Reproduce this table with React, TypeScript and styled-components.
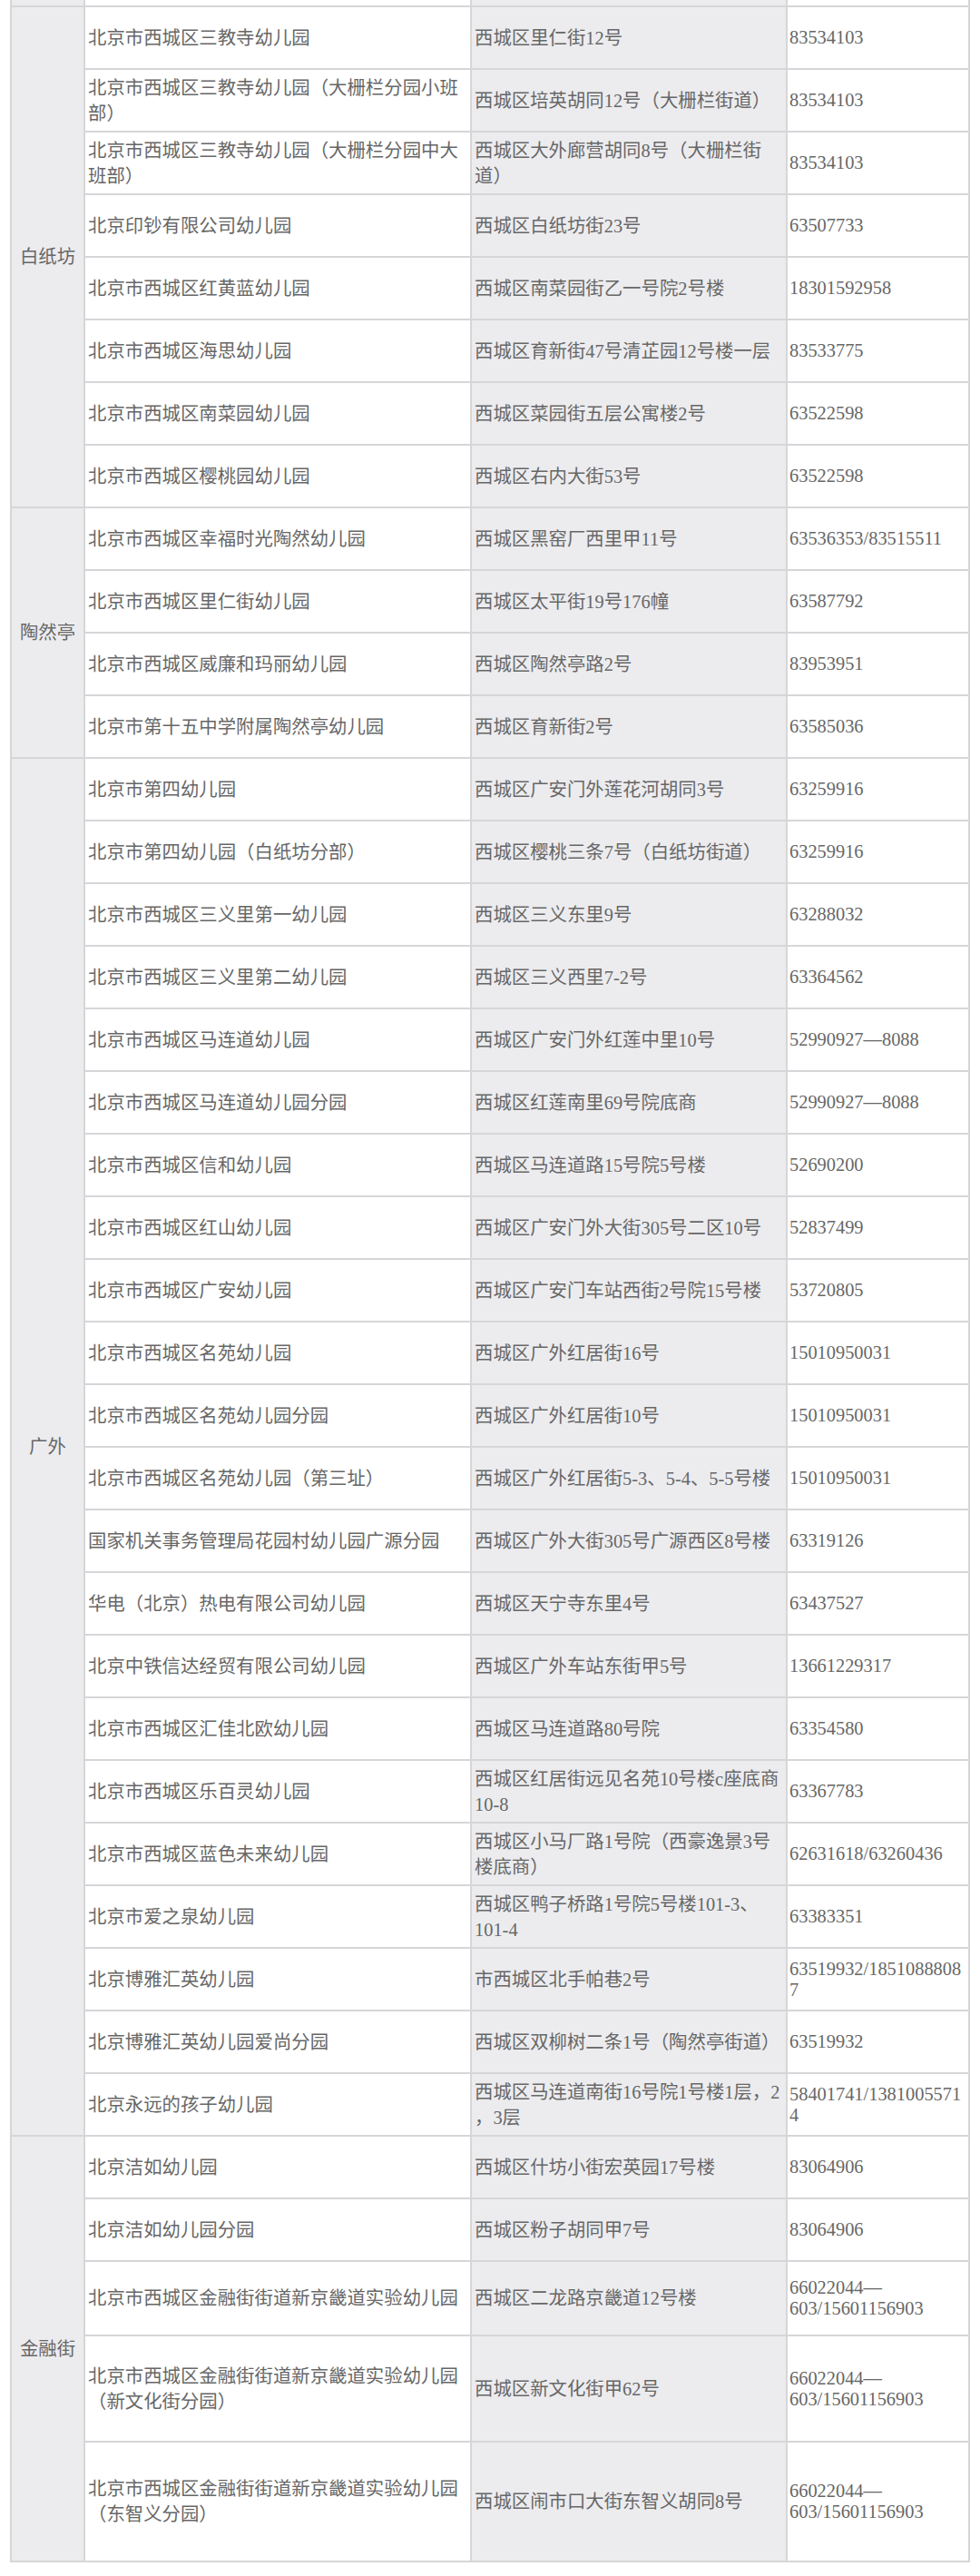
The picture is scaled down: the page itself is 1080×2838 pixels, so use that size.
import React from "react";
import styled, { createGlobalStyle, css } from "styled-components";

const GlobalStyle = createGlobalStyle`
  html, body {
    margin: 0;
    padding: 0;
    background: #ffffff;
  }
  body {
    font-family: "Liberation Serif", "Noto Sans CJK SC", serif;
  }
`;

type Entry = { name: string; address: string; phone: string; height?: number };
type Section = { district: string; entries: Entry[] };

const TALL = "66022044—603/15601156903";

const sections: Section[] = [
  {
    district: "白纸坊",
    entries: [
      { name: "北京市西城区三教寺幼儿园", address: "西城区里仁街12号", phone: "83534103" },
      { name: "北京市西城区三教寺幼儿园（大栅栏分园小班部）", address: "西城区培英胡同12号（大栅栏街道）", phone: "83534103" },
      { name: "北京市西城区三教寺幼儿园（大栅栏分园中大班部）", address: "西城区大外廊营胡同8号（大栅栏街道）", phone: "83534103" },
      { name: "北京印钞有限公司幼儿园", address: "西城区白纸坊街23号", phone: "63507733" },
      { name: "北京市西城区红黄蓝幼儿园", address: "西城区南菜园街乙一号院2号楼", phone: "18301592958" },
      { name: "北京市西城区海思幼儿园", address: "西城区育新街47号清芷园12号楼一层", phone: "83533775" },
      { name: "北京市西城区南菜园幼儿园", address: "西城区菜园街五层公寓楼2号", phone: "63522598" },
      { name: "北京市西城区樱桃园幼儿园", address: "西城区右内大街53号", phone: "63522598" },
    ],
  },
  {
    district: "陶然亭",
    entries: [
      { name: "北京市西城区幸福时光陶然幼儿园", address: "西城区黑窑厂西里甲11号", phone: "63536353/83515511" },
      { name: "北京市西城区里仁街幼儿园", address: "西城区太平街19号176幢", phone: "63587792" },
      { name: "北京市西城区威廉和玛丽幼儿园", address: "西城区陶然亭路2号", phone: "83953951" },
      { name: "北京市第十五中学附属陶然亭幼儿园", address: "西城区育新街2号", phone: "63585036" },
    ],
  },
  {
    district: "广外",
    entries: [
      { name: "北京市第四幼儿园", address: "西城区广安门外莲花河胡同3号", phone: "63259916" },
      { name: "北京市第四幼儿园（白纸坊分部）", address: "西城区樱桃三条7号（白纸坊街道）", phone: "63259916" },
      { name: "北京市西城区三义里第一幼儿园", address: "西城区三义东里9号", phone: "63288032" },
      { name: "北京市西城区三义里第二幼儿园", address: "西城区三义西里7-2号", phone: "63364562" },
      { name: "北京市西城区马连道幼儿园", address: "西城区广安门外红莲中里10号", phone: "52990927—8088" },
      { name: "北京市西城区马连道幼儿园分园", address: "西城区红莲南里69号院底商", phone: "52990927—8088" },
      { name: "北京市西城区信和幼儿园", address: "西城区马连道路15号院5号楼", phone: "52690200" },
      { name: "北京市西城区红山幼儿园", address: "西城区广安门外大街305号二区10号", phone: "52837499" },
      { name: "北京市西城区广安幼儿园", address: "西城区广安门车站西街2号院15号楼", phone: "53720805" },
      { name: "北京市西城区名苑幼儿园", address: "西城区广外红居街16号", phone: "15010950031" },
      { name: "北京市西城区名苑幼儿园分园", address: "西城区广外红居街10号", phone: "15010950031" },
      { name: "北京市西城区名苑幼儿园（第三址）", address: "西城区广外红居街5-3、5-4、5-5号楼", phone: "15010950031" },
      { name: "国家机关事务管理局花园村幼儿园广源分园", address: "西城区广外大街305号广源西区8号楼", phone: "63319126" },
      { name: "华电（北京）热电有限公司幼儿园", address: "西城区天宁寺东里4号", phone: "63437527" },
      { name: "北京中铁信达经贸有限公司幼儿园", address: "西城区广外车站东街甲5号", phone: "13661229317" },
      { name: "北京市西城区汇佳北欧幼儿园", address: "西城区马连道路80号院", phone: "63354580" },
      { name: "北京市西城区乐百灵幼儿园", address: "西城区红居街远见名苑10号楼c座底商10-8", phone: "63367783" },
      { name: "北京市西城区蓝色未来幼儿园", address: "西城区小马厂路1号院（西豪逸景3号楼底商）", phone: "62631618/63260436" },
      { name: "北京市爱之泉幼儿园", address: "西城区鸭子桥路1号院5号楼101-3、101-4", phone: "63383351" },
      { name: "北京博雅汇英幼儿园", address: "市西城区北手帕巷2号", phone: "63519932/18510888087" },
      { name: "北京博雅汇英幼儿园爱尚分园", address: "西城区双柳树二条1号（陶然亭街道）", phone: "63519932" },
      { name: "北京永远的孩子幼儿园", address: "西城区马连道南街16号院1号楼1层，2\n，3层", phone: "58401741/13810055714" },
    ],
  },
  {
    district: "金融街",
    entries: [
      { name: "北京洁如幼儿园", address: "西城区什坊小街宏英园17号楼", phone: "83064906" },
      { name: "北京洁如幼儿园分园", address: "西城区粉子胡同甲7号", phone: "83064906" },
      { name: "北京市西城区金融街街道新京畿道实验幼儿园", address: "西城区二龙路京畿道12号楼", phone: TALL, height: 82 },
      { name: "北京市西城区金融街街道新京畿道实验幼儿园（新文化街分园）", address: "西城区新文化街甲62号", phone: TALL, height: 117 },
      { name: "北京市西城区金融街街道新京畿道实验幼儿园（东智义分园）", address: "西城区闹市口大街东智义胡同8号", phone: TALL, height: 132 },
    ],
  },
];

const GRAY = "#ececef";
const LINE = "#d6d6d8";

const Sheet = styled.main`
  padding: 0 13px 0 11px;
`;

const Table = styled.table`
  width: 1056px;
  border-collapse: collapse;
  table-layout: fixed;
  font-family: "Liberation Serif", "Noto Sans CJK SC", serif;
  font-size: 20.4px;
  color: #676767;
`;

const Column = styled.col<{ $w: number }>`
  width: ${(p) => p.$w}px;
`;

const Row = styled.tr<{ $h: number }>`
  height: ${(p) => p.$h}px;
`;

const cellBase = css`
  border: 2px solid ${LINE};
  vertical-align: middle;
  text-align: left;
  overflow-wrap: anywhere;
`;

const SliverCell = styled.td<{ $tone: "gray" | "white" }>`
  border-left: 2px solid ${LINE};
  border-right: 2px solid ${LINE};
  border-bottom: 2px solid ${LINE};
  border-top: none;
  padding: 0;
  background: ${(p) => (p.$tone === "gray" ? GRAY : "#ffffff")};
`;

const DistrictCell = styled.td`
  ${cellBase};
  background: ${GRAY};
  text-align: center;
  padding: 0 2px;
  line-height: 28px;
`;

const NameCell = styled.td`
  ${cellBase};
  background: #ffffff;
  padding: 0 3px 0 3px;
  line-height: 28px;
`;

const AddressCell = styled.td`
  ${cellBase};
  background: ${GRAY};
  padding: 0 2px 0 3px;
  line-height: 28px;
  white-space: pre-line;
`;

const PhoneCell = styled.td`
  ${cellBase};
  background: #ffffff;
  padding: 0 4px 0 2px;
  line-height: 23px;
`;

export default function App() {
  return (
    <>
      <GlobalStyle />
      <Sheet>
        <Table>
          <colgroup>
            <Column $w={81} />
            <Column $w={426} />
            <Column $w={348} />
            <Column $w={201} />
          </colgroup>
          <tbody>
            <Row $h={7}>
              <SliverCell $tone="gray" />
              <SliverCell $tone="white" />
              <SliverCell $tone="gray" />
              <SliverCell $tone="white" />
            </Row>
            {sections.map((section) =>
              section.entries.map((entry, i) => (
                <Row key={section.district + i} $h={entry.height ?? 69}>
                  {i === 0 && (
                    <DistrictCell rowSpan={section.entries.length}>{section.district}</DistrictCell>
                  )}
                  <NameCell>{entry.name}</NameCell>
                  <AddressCell>{entry.address}</AddressCell>
                  <PhoneCell>{entry.phone}</PhoneCell>
                </Row>
              ))
            )}
          </tbody>
        </Table>
      </Sheet>
    </>
  );
}
